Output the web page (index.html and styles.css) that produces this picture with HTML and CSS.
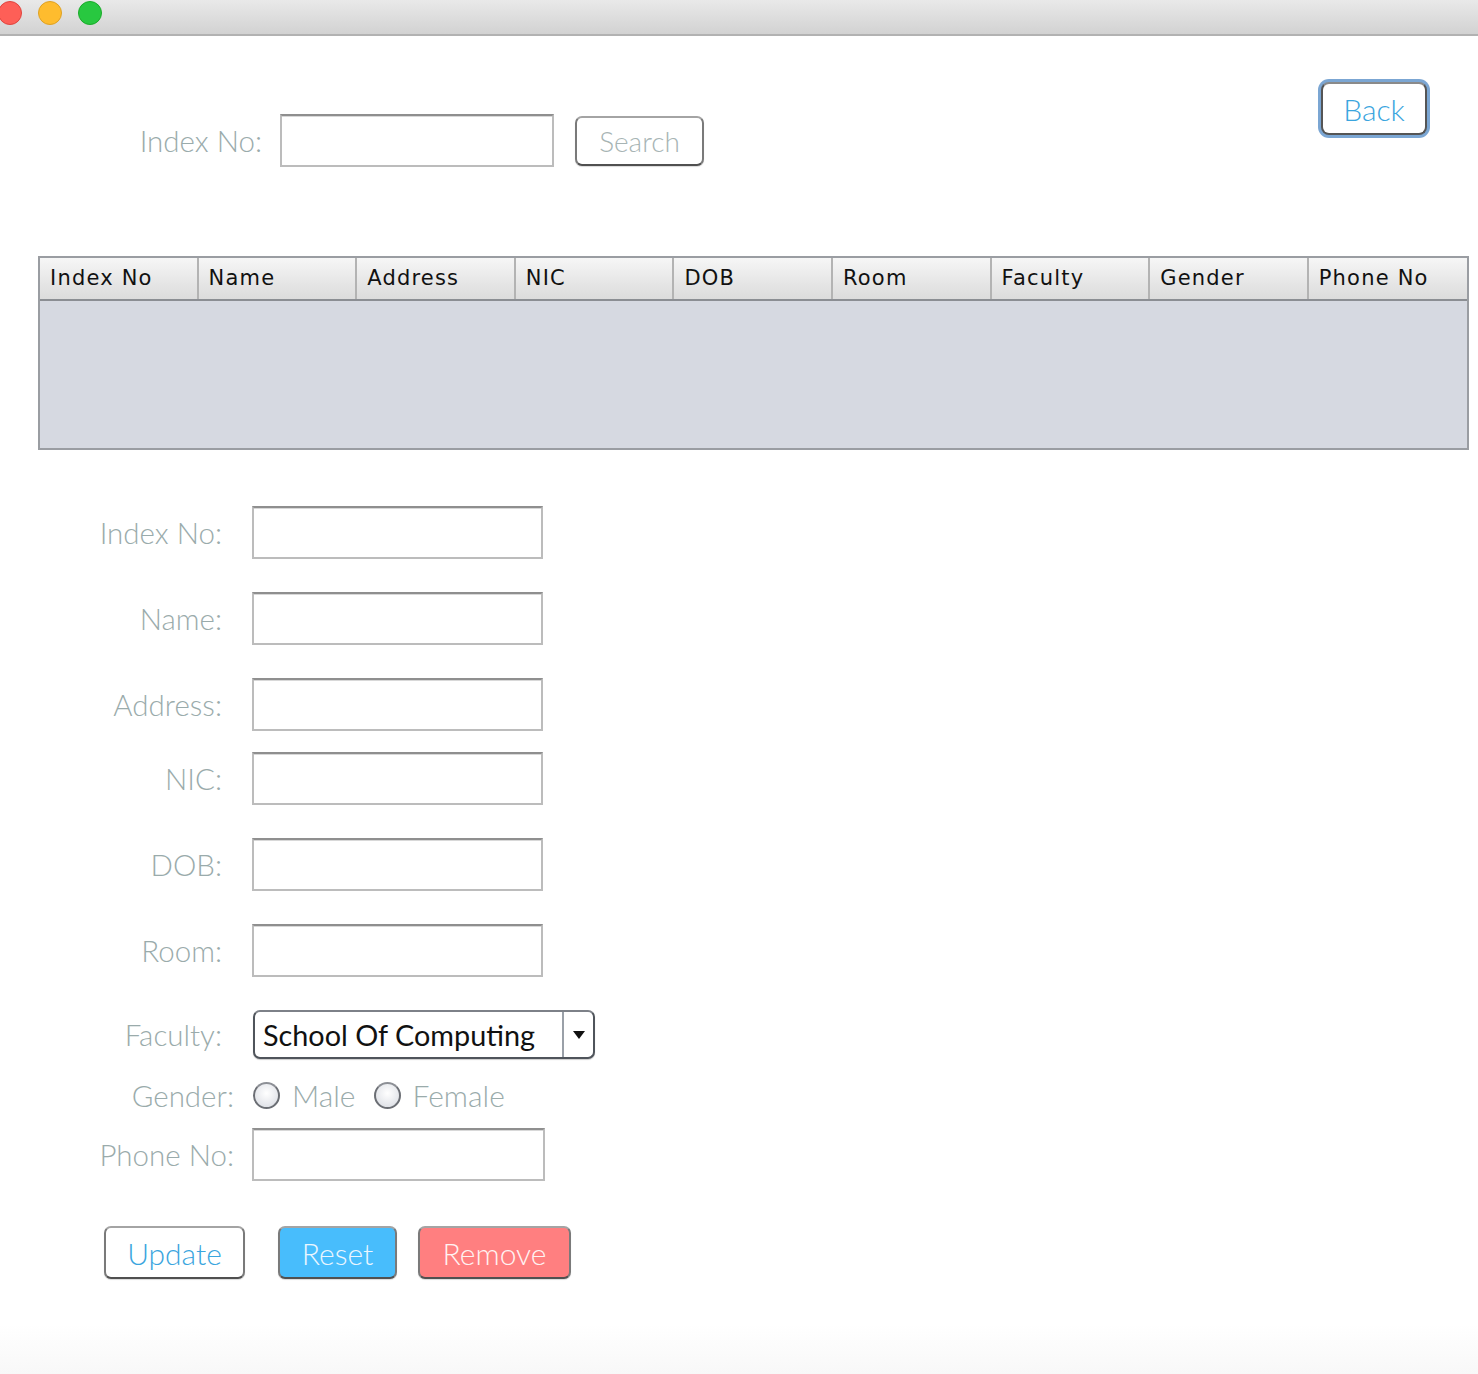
FILE: index.html
```html
<!DOCTYPE html>
<html>
<head>
<meta charset="utf-8">
<link rel="stylesheet" href="styles.css">
</head>
<body>
<div class="titlebar">
  <span class="light red"></span>
  <span class="light yellow"></span>
  <span class="light green"></span>
</div>
<div class="window">
  <div class="top">
    <div class="search-group">
      <label class="lbl top-lbl">Index No:</label>
      <div class="field search-field"></div>
      <button class="btn search-btn">Search</button>
    </div>
    <button class="btn back-btn">Back</button>
  </div>

  <div class="table">
    <div class="thead">
      <div class="th">Index No</div>
      <div class="th">Name</div>
      <div class="th">Address</div>
      <div class="th">NIC</div>
      <div class="th">DOB</div>
      <div class="th">Room</div>
      <div class="th">Faculty</div>
      <div class="th">Gender</div>
      <div class="th last">Phone No</div>
    </div>
    <div class="tbody"></div>
  </div>

  <div class="form">
    <div class="row r-index"><label class="lbl flbl">Index No:</label><div class="field"></div></div>
    <div class="row r-name"><label class="lbl flbl">Name:</label><div class="field"></div></div>
    <div class="row r-address"><label class="lbl flbl">Address:</label><div class="field"></div></div>
    <div class="row r-nic"><label class="lbl flbl">NIC:</label><div class="field"></div></div>
    <div class="row r-dob"><label class="lbl flbl">DOB:</label><div class="field"></div></div>
    <div class="row r-room"><label class="lbl flbl">Room:</label><div class="field"></div></div>
    <div class="row r-faculty"><label class="lbl flbl">Faculty:</label>
      <div class="combo"><span class="combo-text">School Of Computing</span><span class="combo-arrow"><svg width="14" height="10" viewBox="0 0 14 10"><path d="M1 1 L13 1 L7 9 Z" fill="#111"/></svg></span></div>
    </div>
    <div class="row r-gender"><label class="lbl wlbl">Gender:</label>
      <span class="radio"></span><span class="radio-lbl">Male</span>
      <span class="radio"></span><span class="radio-lbl">Female</span>
    </div>
    <div class="row r-phone"><label class="lbl wlbl">Phone No:</label><div class="field phone-field"></div></div>
    <div class="actions">
      <button class="btn update-btn">Update</button>
      <button class="btn reset-btn">Reset</button>
      <button class="btn remove-btn">Remove</button>
    </div>
  </div>
  <div class="footer-fade"></div>
</div>
</body>
</html>
```

FILE: styles.css
```css
* { box-sizing: border-box; }
html, body { margin: 0; padding: 0; background: #fff; }
body { width: 1478px; height: 1374px; overflow: hidden; font-family: "Lato", "Liberation Sans", sans-serif; }

.titlebar {
  height: 36px;
  background: linear-gradient(#e9e9e9, #d2d2d2);
  border-bottom: 2px solid #b2b2b2;
  display: flex;
  align-items: center;
  gap: 16px;
  padding-left: 0;
  margin-left: -2px;
  padding-bottom: 8px;
}
.light { width: 24px; height: 24px; border-radius: 50%; display: block; }
.red { background: #fe5f57; border: 1px solid #e0443e; }
.yellow { background: #febc2e; border: 1px solid #dea123; }
.green { background: #28c840; border: 1px solid #1aab29; }

.window { position: relative; height: 1338px; }

.lbl {
  font-family: "Lato", "Liberation Sans", sans-serif;
  font-weight: 300;
  font-size: 29.5px;
  color: #9aabab;
  text-align: right;
  white-space: nowrap;
}

.top {
  display: flex;
  justify-content: space-between;
  align-items: flex-start;
  height: 220px;
  padding-right: 51px;
}
.search-group {
  display: flex;
  align-items: center;
  margin-top: 78px;
  padding-left: 100px;
}
.top-lbl { width: 162px; margin-right: 18px; }

.field {
  width: 291px;
  height: 53px;
  border: 2px solid #bcbcbc;
  border-top-color: #8f8f8f;
  background: #fff;
  box-shadow: inset 0 1px 0 #d8d8d8;
}
.search-field { width: 274px; }

.btn {
  font-family: "Lato", "Liberation Sans", sans-serif;
  font-weight: 300;
  font-size: 30px;
  border-radius: 7px;
  border: 2px solid #7a7a7a;
  border-top-color: #a4a4a4;
  border-bottom-color: #505050;
  background: #fff;
  padding: 0;
  box-shadow: 0 1px 1px rgba(0,0,0,0.15);
  cursor: default;
}
.search-btn {
  width: 129px; height: 50px;
  margin-left: 21px;
  color: #a7b4b4;
  font-size: 28px;
}
.back-btn {
  margin-top: 46px;
  width: 106px; height: 53px;
  color: #3aa5de;
  border: 2px solid #555;
  border-top-color: #8a8a8a;
  box-shadow: 0 0 0 3px #7ba6d3;
  border-radius: 8px;
  font-size: 30px;
}

.table {
  margin-left: 38px;
  width: 1431px;
  height: 194px;
  border: 2px solid #9a9da2;
  background: #d6d9e1;
}
.thead {
  display: flex;
  height: 43px;
  background: linear-gradient(#f6f6f6, #e6e6e6 60%, #dcdcdc);
  border-bottom: 2px solid #8b8e93;
}
.th {
  width: 158.6px;
  flex: none;
  border-right: 2px solid #b3b3b3;
  padding-left: 10px;
  font-family: "DejaVu Sans", sans-serif;
  font-size: 21px;
  letter-spacing: 1.2px;
  color: #111;
  line-height: 41px;
}
.th.last { border-right: none; flex: 1; }

.form { padding-top: 56px; }
.row { display: flex; align-items: center; }
.flbl { width: 222px; margin-right: 30px; }
.wlbl { width: 234px; margin-right: 18px; }
.r-name, .r-address, .r-dob, .r-room { margin-top: 33px; }
.r-nic { margin-top: 21px; }
.r-faculty { margin-top: 33px; height: 49px; }
.r-gender { margin-top: 16px; height: 40px; }
.r-phone { margin-top: 13px; }
.phone-field { width: 293px; }

.combo {
  margin-left: 1px;
  width: 342px;
  height: 49px;
  border: 2px solid #4f545b;
  border-top-color: #7d8188;
  border-radius: 7px;
  display: flex;
  align-items: center;
  background: #fff;
  box-shadow: 0 1px 1px rgba(0,0,0,0.2);
}
.combo-text {
  flex: 1;
  padding-left: 8px;
  font-family: "Lato", sans-serif;
  font-size: 28.8px;
  color: #111;
  white-space: nowrap;
}
.combo-arrow {
  width: 31px;
  height: 100%;
  border-left: 2px solid #9aa0a8;
  display: flex;
  align-items: center;
  justify-content: center;
}

.radio {
  width: 27px; height: 27px;
  border-radius: 50%;
  border: 2px solid #6b6e74;
  border-top-color: #8d9096;
  background: radial-gradient(circle at 50% 40%, #ffffff, #e3e5ea 70%, #cdd0d6);
  margin-left: 1px;
  margin-right: 12px;
  flex: none;
}
.radio-lbl {
  font-family: "Lato", sans-serif;
  font-weight: 300;
  font-size: 30px;
  color: #9aabab;
  margin-right: 17px;
}

.actions {
  display: flex;
  margin-top: 45px;
  padding-left: 104px;
}
.actions .btn { height: 53px; font-size: 30px; }
.update-btn { width: 141px; color: #3aa5de; }
.reset-btn { width: 119px; margin-left: 33px; background: #48bdfc; color: #eaf6ff; }
.remove-btn { width: 153px; margin-left: 21px; background: #ff7f80; color: #fff2f2; }

.footer-fade {
  position: absolute;
  left: 0; right: 0; bottom: 0;
  height: 50px;
  background: linear-gradient(rgba(248,248,248,0), #f8f8f8);
}
```
